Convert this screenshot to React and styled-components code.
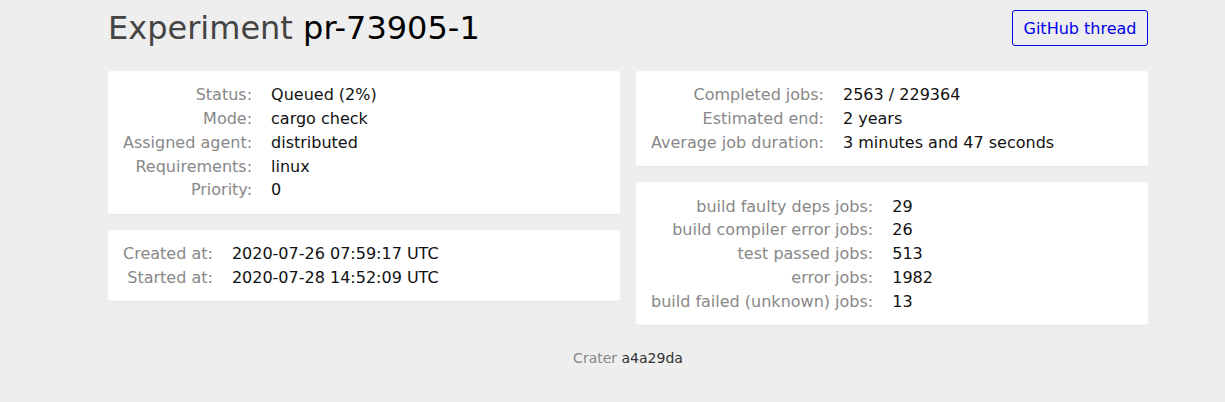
import React from "react";
import styled, { createGlobalStyle } from "styled-components";

const Global = createGlobalStyle`
  html, body { margin: 0; padding: 0; background: #eeeeee; }
  body { font-family: "DejaVu Sans", "Liberation Sans", sans-serif; color: #111; font-size: 16px; }
`;

const Page = styled.div`
  width: 1040px;
  margin-left: 108px;
  padding-top: 10px;
`;

const Header = styled.header`
  display: flex;
  align-items: center;
  justify-content: space-between;
  height: 36px;
  margin-bottom: 25px;
`;

const Title = styled.h1`
  margin: 0;
  font-size: 32px;
  font-weight: normal;
  line-height: 36px;
  color: #000;
`;

const TitleMuted = styled.span`
  color: #444;
`;

const Button = styled.a`
  display: inline-flex;
  align-items: center;
  box-sizing: border-box;
  height: 36px;
  padding: 0 10.5px;
  border: 1px solid #0000ee;
  border-radius: 3px;
  color: #0000ee;
  text-decoration: none;
  font-size: 16px;
`;

const Columns = styled.div`
  display: grid;
  grid-template-columns: 1fr 1fr;
  column-gap: 16px;
  align-items: start;
`;

const Column = styled.div`
  display: flex;
  flex-direction: column;
  gap: 16px;
`;

const Card = styled.section`
  background: #fff;
  border-radius: 3px;
  box-shadow: 0 1px 1px rgba(0, 0, 0, 0.04);
  padding: 12px 15px;
`;

const Table = styled.div`
  display: grid;
  grid-template-columns: auto 1fr;
  column-gap: 19px;
  grid-auto-rows: 23.75px;
  align-items: center;
`;

const Label = styled.div`
  text-align: right;
  color: #888;
  white-space: nowrap;
`;

const Value = styled.div`
  color: #111;
  white-space: nowrap;
`;

const Footer = styled.footer`
  text-align: center;
  font-size: 14px;
  color: #333;
  margin-top: 25px;
`;

const FooterMuted = styled.span`
  color: #888;
`;

function Info({ rows }) {
  return (
    <Card>
      <Table>
        {rows.map(([k, v]) => (
          <React.Fragment key={k}>
            <Label>{k}:</Label>
            <Value>{v}</Value>
          </React.Fragment>
        ))}
      </Table>
    </Card>
  );
}

export default function App() {
  return (
    <>
      <Global />
      <Page>
        <Header>
          <Title>
            <TitleMuted>Experiment</TitleMuted> pr-73905-1
          </Title>
          <Button href="#">GitHub thread</Button>
        </Header>
        <Columns>
          <Column>
            <Info
              rows={[
                ["Status", "Queued (2%)"],
                ["Mode", "cargo check"],
                ["Assigned agent", "distributed"],
                ["Requirements", "linux"],
                ["Priority", "0"],
              ]}
            />
            <Info
              rows={[
                ["Created at", "2020-07-26 07:59:17 UTC"],
                ["Started at", "2020-07-28 14:52:09 UTC"],
              ]}
            />
          </Column>
          <Column>
            <Info
              rows={[
                ["Completed jobs", "2563 / 229364"],
                ["Estimated end", "2 years"],
                ["Average job duration", "3 minutes and 47 seconds"],
              ]}
            />
            <Info
              rows={[
                ["build faulty deps jobs", "29"],
                ["build compiler error jobs", "26"],
                ["test passed jobs", "513"],
                ["error jobs", "1982"],
                ["build failed (unknown) jobs", "13"],
              ]}
            />
          </Column>
        </Columns>
        <Footer>
          <FooterMuted>Crater</FooterMuted> a4a29da
        </Footer>
      </Page>
    </>
  );
}
